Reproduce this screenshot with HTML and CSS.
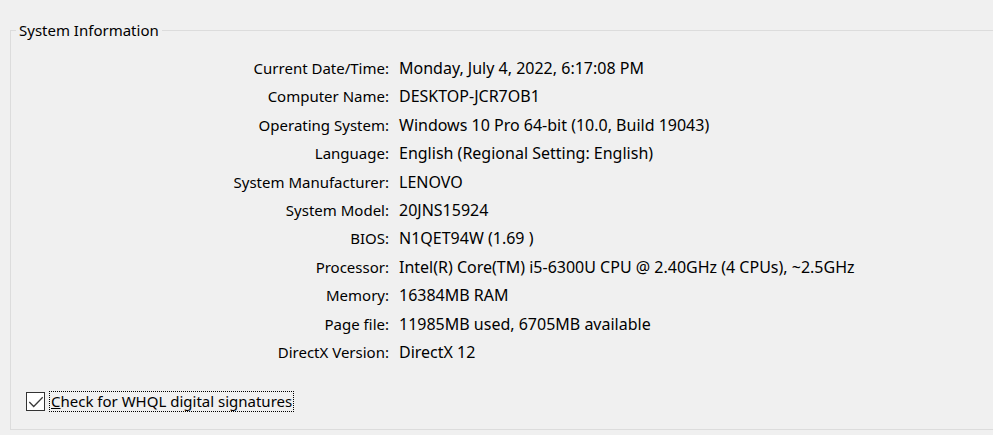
FILE: index.html
```html
<!DOCTYPE html>
<html>
<head>
<meta charset="utf-8">
<link rel="stylesheet" href="styles.css">
</head>
<body>
<fieldset class="group">
  <legend class="title">System Information</legend>
  <div class="grid">
    <div class="label">Current Date/Time:</div><div class="value">Monday, July 4, 2022, 6:17:08 PM</div>
    <div class="label">Computer Name:</div><div class="value">DESKTOP-JCR7OB1</div>
    <div class="label">Operating System:</div><div class="value">Windows 10 Pro 64-bit (10.0, Build 19043)</div>
    <div class="label">Language:</div><div class="value">English (Regional Setting: English)</div>
    <div class="label">System Manufacturer:</div><div class="value">LENOVO</div>
    <div class="label">System Model:</div><div class="value">20JNS15924</div>
    <div class="label">BIOS:</div><div class="value">N1QET94W (1.69 )</div>
    <div class="label">Processor:</div><div class="value">Intel(R) Core(TM) i5-6300U CPU @ 2.40GHz (4 CPUs), ~2.5GHz</div>
    <div class="label">Memory:</div><div class="value">16384MB RAM</div>
    <div class="label">Page file:</div><div class="value">11985MB used, 6705MB available</div>
    <div class="label">DirectX Version:</div><div class="value">DirectX 12</div>
  </div>
  <label class="check">
    <span class="box"><svg width="17" height="17" viewBox="0 0 17 17"><path d="M2.3 9 L6.7 13.5 L15.7 4.3" fill="none" stroke="#3a3a3a" stroke-width="1.3"/></svg></span>
    <span class="check-text"><u>C</u>heck for WHQL digital signatures</span>
  </label>
</fieldset>
</body>
</html>
```
FILE: styles.css
```css
html, body {
  margin: 0;
  padding: 0;
  background: #f0f0f0;
  width: 993px;
  height: 435px;
  overflow: hidden;
}
body {
  font-family: "Noto Sans", "Open Sans", sans-serif;
  font-size: 15px;
  color: #000;
}
.group {
  margin: 20px 0 0 10px;
  padding: 0;
  border: 1px solid #dcdcdc;
  border-right: none;
  height: 410px;
  box-sizing: border-box;
  width: 1000px;
  display: flex;
  flex-direction: column;
}
.title {
  margin-left: 5px;
  padding: 0 3px;
  line-height: 20px;
}
.grid {
  display: grid;
  grid-template-columns: 378px auto;
  column-gap: 10px;
  grid-auto-rows: 28.4px;
  margin-top: 14px;
  line-height: 28.4px;
}
.label {
  text-align: right;
  white-space: nowrap;
}
.value {
  white-space: nowrap;
  font-size: 16px;
}
.check {
  display: flex;
  align-items: center;
  margin: 25px 0 0 15px;
  gap: 4px;
}
.box {
  width: 17px;
  height: 17px;
  border: 1px solid #333;
  background: #fff;
  display: block;
}
.box svg { display: block; }
.check-text {
  border: 1px dotted #000;
  padding: 0 1px;
  line-height: 19px;
}
.check-text u { text-decoration: underline; }
```
